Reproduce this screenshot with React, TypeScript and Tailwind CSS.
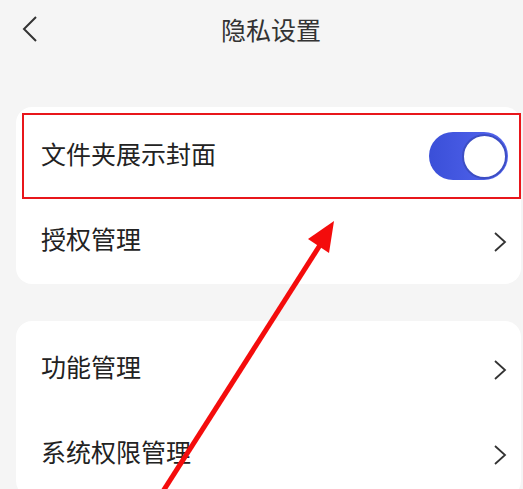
const font = { fontFamily: '"Noto Sans CJK SC", "Noto Sans", sans-serif' };

const Chevron = () => (
  <svg width="14" height="22" viewBox="0 0 14 22" className="text-[#333]">
    <path d="M2 2 L12 11 L2 20" fill="none" stroke="currentColor" strokeWidth="1.8" strokeLinejoin="miter" />
  </svg>
);

const Row = ({ label }: { label: string }) => (
  <div className="h-[85px] flex items-center justify-between pl-[25px] pr-[14px]">
    <span className="text-[25px] text-[#222] mb-[5px]">{label}</span>
    <Chevron />
  </div>
);

const App = () => {
  return (
    <div className="relative w-[523px] h-[489px] overflow-hidden bg-[#f5f5f5]" style={font}>
      <header className="h-[60px] flex items-center relative">
        <svg width="18" height="28" viewBox="0 0 18 28" className="ml-[21px] mt-[-2px] text-[#333]">
          <path d="M15 2 L3 14 L15 26" fill="none" stroke="currentColor" strokeWidth="2" />
        </svg>
        <h1 className="absolute left-[221px] top-[11px] text-[25px] leading-[36px] text-[#333] font-normal">隐私设置</h1>
      </header>

      <div className="mt-[47px] ml-[16px] mr-[2px] bg-white rounded-[16px] pt-[6px]">
        <div className="h-[86px] ml-[6px] border-2 border-[#e8161b] flex items-center justify-between pl-[17px] pr-[11px]">
          <span className="text-[25px] text-[#222] mb-[4px]">文件夹展示封面</span>
          <div className="w-[79px] h-[48px] rounded-full bg-gradient-to-r from-[#3a4fd8] to-[#5566f0] flex items-center justify-end pr-[1px]">
            <div className="w-[45px] h-[45px] rounded-full bg-white border-2 border-[#3d4ec4]" />
          </div>
        </div>
        <Row label="授权管理" />
      </div>

      <div className="mt-[37px] ml-[16px] mr-[2px] bg-white rounded-[16px] pt-[6px]">
        <Row label="功能管理" />
        <Row label="系统权限管理" />
      </div>

      <svg className="absolute inset-0 pointer-events-none" width="523" height="489" viewBox="0 0 523 489">
        <line x1="160" y1="496" x2="322" y2="242" stroke="#f40c0c" strokeWidth="5" />
        <polygon points="334,221 329,253 308,239" fill="#f40c0c" />
      </svg>
    </div>
  );
};

export default App;
